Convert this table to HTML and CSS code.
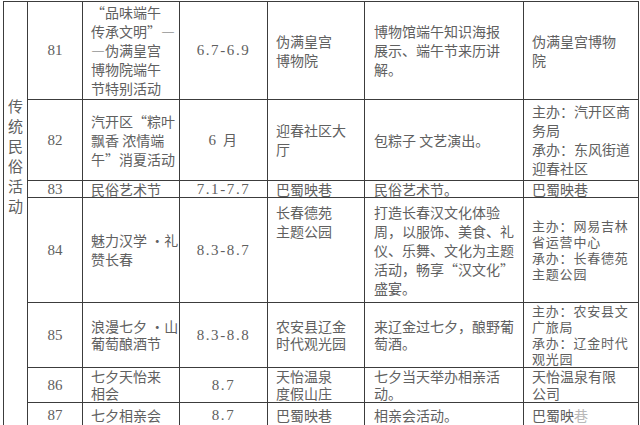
FILE: index.html
```html
<!DOCTYPE html>
<html lang="zh-CN">
<head>
<meta charset="utf-8">
<title>传统民俗活动</title>
<link rel="stylesheet" href="styles.css">
</head>
<body>
<table class="events">
  <colgroup>
    <col class="c-cat">
    <col class="c-no">
    <col class="c-name">
    <col class="c-date">
    <col class="c-place">
    <col class="c-desc">
    <col class="c-org">
  </colgroup>
  <tbody>
    <tr class="r81">
      <td class="cat" rowspan="7">传统民俗活动</td>
      <td class="no">81</td>
      <td class="txt">“品味端午<br>传承文明”—<br>—伪满皇宫<br>博物院端午<br>节特别活动</td>
      <td class="date">6.7-6.9</td>
      <td class="txt">伪满皇宫<br>博物院</td>
      <td class="txt desc">博物馆端午知识海报<br>展示、端午节来历讲<br>解。</td>
      <td class="txt">伪满皇宫博物<br>院</td>
    </tr>
    <tr class="r82">
      <td class="no">82</td>
      <td class="txt">汽开区“粽叶<br>飘香 浓情端<br>午”消夏活动</td>
      <td class="date">6 <span class="cjk">月</span></td>
      <td class="txt">迎春社区大<br>厅</td>
      <td class="txt desc">包粽子 文艺演出。</td>
      <td class="txt">主办：汽开区商<br>务局<br>承办：东风街道<br>迎春社区</td>
    </tr>
    <tr class="r83">
      <td class="no">83</td>
      <td class="txt">民俗艺术节</td>
      <td class="date">7.1-7.7</td>
      <td class="txt">巴蜀映巷</td>
      <td class="txt desc">民俗艺术节。</td>
      <td class="txt">巴蜀映巷</td>
    </tr>
    <tr class="r84">
      <td class="no">84</td>
      <td class="txt">魅力汉学 •礼<br>赞长春</td>
      <td class="date">8.3-8.7</td>
      <td class="txt top">长春德苑<br>主题公园</td>
      <td class="txt desc">打造长春汉文化体验<br>周，以服饰、美食、礼<br>仪、乐舞、文化为主题<br>活动，畅享“汉文化”<br>盛宴。</td>
      <td class="txt tight">主办：网易吉林<br>省运营中心<br>承办：长春德苑<br>主题公园</td>
    </tr>
    <tr class="r85">
      <td class="no">85</td>
      <td class="txt">浪漫七夕 •山<br>葡萄酿酒节</td>
      <td class="date">8.3-8.8</td>
      <td class="txt">农安县辽金<br>时代观光园</td>
      <td class="txt desc">来辽金过七夕，酿野葡<br>萄酒。</td>
      <td class="txt tight">主办：农安县文<br>广旅局<br>承办：辽金时代<br>观光园</td>
    </tr>
    <tr class="r86">
      <td class="no">86</td>
      <td class="txt">七夕天怡来<br>相会</td>
      <td class="date">8.7</td>
      <td class="txt">天怡温泉<br>度假山庄</td>
      <td class="txt desc">七夕当天举办相亲活<br>动。</td>
      <td class="txt">天怡温泉有限<br>公司</td>
    </tr>
    <tr class="r87">
      <td class="no">87</td>
      <td class="txt">七夕相亲会</td>
      <td class="date">8.7</td>
      <td class="txt">巴蜀映巷</td>
      <td class="txt desc">相亲会活动。</td>
      <td class="txt">巴蜀映<span class="faint">巷</span></td>
    </tr>
  </tbody>
</table>
</body>
</html>
```

FILE: styles.css
```css
html, body {
  margin: 0;
  padding: 0;
  background: #ffffff;
}

body {
  padding: 1px 2px 0 3px;
  font-family: "Noto Sans CJK SC", sans-serif;
  font-size: 14px;
  color: #606060;
}

.events {
  border-collapse: collapse;
  table-layout: fixed;
  width: 635px;
  font-family: "Noto Sans CJK SC", sans-serif;
}

.c-cat { width: 24px; }
.c-no { width: 55px; }
.c-name { width: 97px; }
.c-date { width: 88px; }
.c-place { width: 97px; }
.c-desc { width: 159px; }
.c-org { width: 115px; }

.events td {
  border: 1px solid #3c3c3c;
  padding: 0;
  vertical-align: middle;
  line-height: 19px;
  white-space: nowrap;
  overflow: hidden;
}

.events td.cat {
  vertical-align: top;
  white-space: normal;
  text-align: center;
  font-size: 15px;
  line-height: 20px;
  padding-top: 94px;
  word-break: break-all;
}

.events td.no {
  text-align: center;
  font-family: "Liberation Serif", serif;
  font-size: 15px;
}

.events td.date {
  text-align: center;
  font-family: "Liberation Serif", serif;
  font-size: 15px;
  letter-spacing: 1.6px;
}

.events td.date .cjk {
  font-family: "Noto Sans CJK SC", sans-serif;
  font-size: 14px;
}

.events td.txt {
  text-align: left;
  padding-left: 8px;
}

.events td.desc {
  padding-left: 9px;
}

.events td.top {
  vertical-align: top;
  padding-top: 5px;
}

.events td.tight {
  font-size: 13px;
  letter-spacing: 0.8px;
  line-height: 16px;
}

.r81 td { height: 97px; }
.r82 td { height: 80px; }
.r83 td { height: 16px; line-height: 16px; }
.r84 td { height: 99px; }
.r85 td { height: 64px; line-height: 17px; }
.r86 td { height: 34px; line-height: 17px; }
.r87 td { height: 24px; }

.r85 td.tight { line-height: 16px; }

.faint {
  color: #b8b8b8;
}
```
